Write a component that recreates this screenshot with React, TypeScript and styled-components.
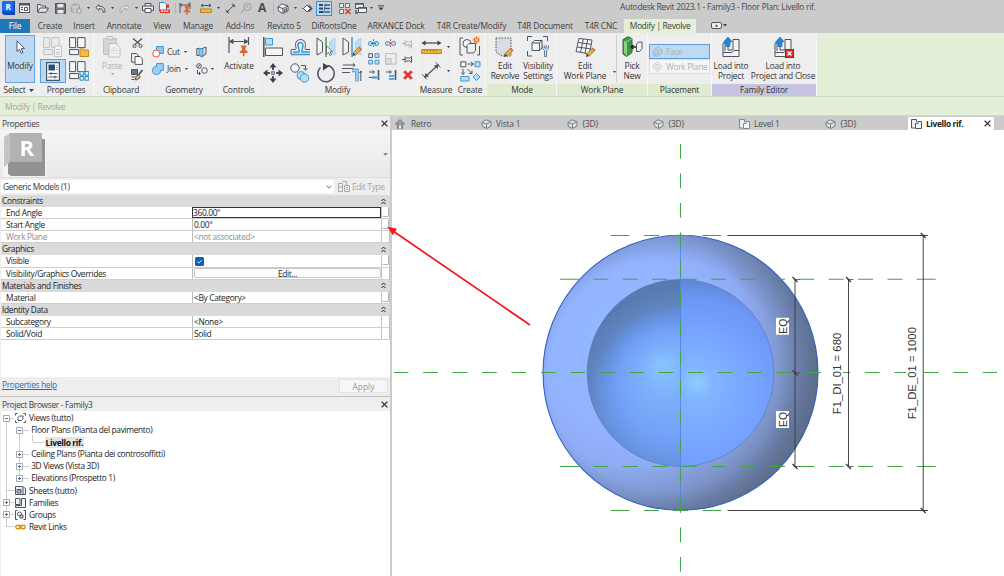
import React from "react";
import styled, { createGlobalStyle } from "styled-components";

const dk = "#4d5462";
const bl = "#3f97d3";
const lb = "#b9def3";
const green = "#3fa545";

const Global = createGlobalStyle`
  * { box-sizing: border-box; }
  body { margin: 0; background: #fff; overflow: hidden; }
  svg { display: block; flex: none; }
`;

const Window = styled.div`
  position: relative;
  width: 1004px;
  height: 576px;
  display: flex;
  flex-direction: column;
  background: #eee;
  color: #333;
  font: 8.4px/12px "Open Sans", "Noto Sans", sans-serif;
  letter-spacing: -0.2px;
  white-space: nowrap;
  overflow: hidden;
`;

/* ---------- title bar ---------- */
const QuickBar = styled.div`
  display: flex;
  align-items: center;
  height: 18px;
  padding-bottom: 2px;
  background: #cbcbcb;
`;
const Slot = styled.div<{ $w: number; $ml?: number }>`
  display: flex;
  align-items: center;
  justify-content: center;
  flex: none;
  width: ${(p) => p.$w}px;
  height: 16px;
  margin-left: ${(p) => p.$ml || 0}px;
  svg { overflow: visible; }
`;
const SlotOn = styled.div`
  display: flex;
  align-items: center;
  justify-content: center;
  width: 16px;
  height: 15px;
  border: 1px solid #3b8fd6;
  background: #b9dcf7;
`;
const VLine = styled.i`
  width: 1px;
  height: 12px;
  background: #b4b4b4;
`;
const Title = styled.div`
  margin-left: 232px;
  padding-bottom: 3px;
  color: #484848;
  letter-spacing: -0.27px;
`;

/* ---------- tabs ---------- */
const Tabs = styled.div`
  display: flex;
  align-items: flex-end;
  height: 15px;
  background: #cbcbcb;
`;
const Tab = styled.div<{ $w: number; $kind?: "file" | "active"; $ml?: number }>`
  flex: none;
  width: ${(p) => p.$w}px;
  height: 14px;
  line-height: 13px;
  margin-left: ${(p) => p.$ml || 0}px;
  text-align: center;
  letter-spacing: ${(p) => (p.$kind === "active" ? "-0.33px" : "-0.17px")};
  background: ${(p) => (p.$kind === "file" ? "#1c7ab8" : p.$kind === "active" ? "#e4efd8" : "transparent")};
  color: ${(p) => (p.$kind === "file" ? "#fff" : "#3c3c3c")};
`;

/* ---------- ribbon ---------- */
const Ribbon = styled.div`
  display: flex;
  height: 63px;
  background: #e4efd8;
`;
const Panel = styled.div<{ $w: number; $ml?: number }>`
  display: flex;
  flex-direction: column;
  flex: none;
  width: ${(p) => p.$w}px;
  margin-left: ${(p) => p.$ml || 0}px;
  background: #eee;
  border-right: 1px solid #f7f7f7;
`;
const PanelBody = styled.div`
  display: flex;
  height: 51px;
`;
const PanelLabel = styled.div<{ $bg?: string }>`
  display: flex;
  align-items: center;
  justify-content: center;
  gap: 4px;
  height: 12px;
  line-height: 12px;
  background: ${(p) => p.$bg || "transparent"};
`;
const Big = styled.div<{ $w: number; $off?: boolean }>`
  display: flex;
  flex-direction: column;
  align-items: center;
  flex: none;
  width: ${(p) => p.$w}px;
  padding-top: 3px;
  line-height: 10px;
  text-align: center;
  color: ${(p) => (p.$off ? "#b0b0b0" : "#333")};
`;
const BigIcon = styled.div`
  display: flex;
  align-items: center;
  justify-content: center;
  height: 22px;
  margin-bottom: 3px;
`;
const ModifyButton = styled(Big)`
  margin: 2px 0 0 5px;
  height: 48px;
  padding-top: 0;
  border: 1px solid #6ba5d8;
  background: #bcd9f3;
`;
const IconGrid = styled.div<{ $cols: string; $rows: string; $pt?: number; $pl?: number }>`
  display: grid;
  grid-template-columns: ${(p) => p.$cols};
  grid-template-rows: ${(p) => p.$rows};
  place-items: center;
  align-content: start;
  padding: ${(p) => p.$pt || 0}px 0 0 ${(p) => p.$pl || 0}px;
`;
const Drop = styled.div<{ $pt: number }>`
  flex: none;
  padding-top: ${(p) => p.$pt}px;
`;
const Pressed = styled.div`
  display: flex;
  align-items: center;
  justify-content: center;
  width: 26px;
  height: 24px;
  border: 1px solid #58a0de;
  background: #b9daf5;
`;
const Cmd = styled.div`
  display: flex;
  align-items: center;
  justify-self: start;
  gap: 3px;
`;
const Divider = styled.i`
  width: 1px;
  height: 47px;
  margin-top: 2px;
  background: #cfcfcf;
`;
const PlacementList = styled.div`
  display: flex;
  flex-direction: column;
  padding: 11px 0 0 1px;
  letter-spacing: -0.3px;
`;
const PlacementItem = styled.div<{ $on?: boolean }>`
  display: flex;
  align-items: center;
  gap: 3px;
  width: 61px;
  height: 15px;
  padding-left: 2px;
  border: 1px solid ${(p) => (p.$on ? "#5c9fdb" : "#dedede")};
  background: ${(p) => (p.$on ? "#bcdaf4" : "#f6f6f6")};
  color: #aeb2b6;
`;
const OptionsBar = styled.div`
  height: 20px;
  padding: 4px 5px 0;
  line-height: 12px;
  border-top: 1px solid #cfd6c8;
  border-bottom: 1px solid #d3dac9;
  background: #e4efd8;
  color: #a2a8a0;
  letter-spacing: -0.35px;
`;

/* ---------- body ---------- */
const Body = styled.div`
  display: flex;
  flex: 1;
  min-height: 0;
`;
const Side = styled.div`
  display: flex;
  flex-direction: column;
  flex: none;
  width: 392px;
  border-right: 2px solid #cbcbcb;
  letter-spacing: -0.34px;
`;
const PaneTitle = styled.div`
  display: flex;
  align-items: center;
  justify-content: space-between;
  height: 14px;
  padding: 1px 2px 0;
  background: #eee;
  color: #3d3d3d;
`;
const Preview = styled.div`
  display: flex;
  align-items: center;
  justify-content: space-between;
  height: 48px;
  padding: 1px 2px 0 3px;
  background: linear-gradient(#f5f5f5, #e9e9e9);
  border-bottom: 1px solid #dcdcdc;
`;
const TypeRow = styled.div`
  display: flex;
  align-items: center;
  height: 17px;
`;
const Combo = styled.div`
  display: flex;
  align-items: center;
  justify-content: space-between;
  width: 333px;
  height: 13px;
  margin-left: 1px;
  padding: 0 2px;
  background: #fff;
`;
const EditType = styled.div`
  display: flex;
  align-items: center;
  gap: 2px;
  padding-left: 4px;
  color: #a5a5a5;
`;
const Grid = styled.div`
  height: 182px;
  margin-left: 1px;
  background: #fff;
`;
const GroupRow = styled.div`
  display: flex;
  align-items: center;
  justify-content: space-between;
  height: 12.1px;
  padding: 0 4px 0 1px;
  background: #dadada;
  color: #222;
`;
const PropRow = styled.div<{ $off?: boolean }>`
  display: grid;
  grid-template-columns: 191px 189px 1fr;
  height: 12.1px;
  line-height: 11px;
  border-bottom: 1px solid #cfcfcf;
  color: ${(p) => (p.$off ? "#8d8d8d" : "#222")};
`;
const Key = styled.div`
  padding-left: 5px;
`;
const Val = styled.div<{ $focus?: boolean }>`
  display: flex;
  align-items: center;
  padding-left: ${(p) => (p.$focus ? 0 : 1)}px;
  border: ${(p) => (p.$focus ? "1px solid #333" : "solid #bbb")};
  border-width: ${(p) => (p.$focus ? "1px" : "0 0 0 1px")};
  line-height: ${(p) => (p.$focus ? 9 : 11)}px;
`;
const AssocCell = styled.div`
  border-left: 1px solid #c4c4c4;
  border-right: 1px solid #c4c4c4;
`;
const Assoc = styled.div<{ $btn?: boolean }>`
  height: 10px;
  width: 7px;
  border: ${(p) => (p.$btn ? "solid #b5b5b5" : "solid transparent")};
  border-width: 0 1px 1px 0;
  border-radius: 2px;
  background: #fff;
`;
const EditButton = styled.div`
  width: 187px;
  height: 10px;
  line-height: 9px;
  text-align: center;
  border: 1px solid #c6c6c6;
  border-radius: 2px;
  background: #fdfdfd;
`;
const PaneFooter = styled.div`
  display: flex;
  align-items: flex-start;
  justify-content: space-between;
  height: 20px;
  padding: 2px 2px 0;
  border-bottom: 1px solid #bfbfbf;
`;
const Link = styled.span`
  color: #1a6fc4;
  text-decoration: underline;
  text-decoration-thickness: 1px;
`;
const Apply = styled.div`
  width: 49px;
  height: 14px;
  line-height: 13px;
  text-align: center;
  letter-spacing: 0;
  border: 1px solid #e2e2e2;
  background: #f6f6f6;
  color: #999;
`;
const Tree = styled.div`
  flex: 1;
  margin-left: 1px;
  padding-top: 1px;
  background:
    linear-gradient(#cfcfcf, #cfcfcf) 5px 7px / 1px 109px no-repeat,
    linear-gradient(#cfcfcf, #cfcfcf) 18px 19px / 1px 49px no-repeat,
    linear-gradient(#cfcfcf, #cfcfcf) 31px 24px / 1px 7px no-repeat,
    #fff;
  color: #222;
`;
const Node = styled.div<{ $d: number }>`
  display: flex;
  align-items: center;
  height: 12.08px;
  padding-left: ${(p) => 2 + p.$d * 13.3}px;
`;
const Leaf = styled.b`
  margin-left: 1px;
  padding: 0 1px;
  height: 11px;
  line-height: 11px;
  background: #e3e3e3;
  color: #111;
`;
const Work = styled.div`
  display: flex;
  flex-direction: column;
  flex: 1;
`;
const ViewTabs = styled.div`
  display: flex;
  height: 14px;
  padding-top: 1px;
  background: #cbcbcb;
`;
const ViewTab = styled.div<{ $on?: boolean }>`
  display: flex;
  align-items: center;
  gap: 4px;
  width: 86px;
  padding-left: 3px;
  background: ${(p) => (p.$on ? "#fff" : "transparent")};
  font-weight: ${(p) => (p.$on ? 700 : 400)};
  letter-spacing: ${(p) => (p.$on ? "-0.37px" : "-0.2px")};
  color: ${(p) => (p.$on ? "#222" : "#505050")};
  svg:last-child:not(:first-child) { margin-left: auto; margin-right: 3px; }
`;
const Canvas = styled.svg`
  background: #fff;
`;
const Pointer = styled.svg`
  position: absolute;
  left: 384px;
  top: 222px;
`;

type IP = { w: number; h: number; children: React.ReactNode; sw?: number; c?: string };
const I = ({ w, h, children, sw = 1, c = dk }: IP) => (
  <svg width={w} height={h} viewBox={`0 0 ${w} ${h}`} fill="none" stroke={c} strokeWidth={sw}>
    {children}
  </svg>
);
const Down = ({ s = 4, c = "#3c3c3c" }: { s?: number; c?: string }) => (
  <svg width={s} height={s / 2 + 0.5} viewBox="0 0 4 2.5">
    <path d="M0 0h4L2 2.5z" fill={c} />
  </svg>
);
const Cross = () => (
  <I w={7} h={7} sw={1.3} c="#2c2c2c"><path d="M.6.6l5.8 5.8M6.4.6L.6 6.4" /></I>
);
const Chev = () => (
  <I w={5} h={7} c="#222"><path d="M.5 3L2.5 1l2 2M.5 6l2-2 2 2" /></I>
);
const Pin = ({ x, y }: { x: number; y: number }) => (
  <g transform={`translate(${x} ${y})`} stroke="none">
    <path d="M1.2 0h4.600v1.200l-.8.5v2l1.800 1.600v1H.2v-1L2 3.700v-2l-.8-.5z" fill="#e2662c" />
    <path d="M3 6.300h1V9H3z" fill="#a04a24" />
  </g>
);
const Pencil = ({ x, y }: { x: number; y: number }) => (
  <g transform={`translate(${x} ${y})`} stroke="none">
    <path d="M6.800 0l2.400 2.200-6 5.900-2.500-2.300z" fill="#efb13e" stroke="#5b4a2a" strokeWidth=".6" />
    <path d="M6.800 0l2.400 2.200-1 1-2.400-2.300z" fill="#e06a50" />
    <path d="M.7 5.800l2.500 2.300L0 9z" fill="#3b3b3b" />
  </g>
);

/* quick access icons */
const Logo = () => (
  <svg width="13" height="14" viewBox="0 0 13 14">
    <path d="M0 1l2-1h11v14H2l-2-2z" fill="#0b49b4" />
    <path d="M0 1l2-1h9.500v10.500H0z" fill="#1b6cf0" />
    <text x="6.100" y="8.500" fontSize="8" fontWeight="700" fontFamily="Open Sans" fill="#fff" textAnchor="middle">R</text>
  </svg>
);
const HomeWin = () => (
  <I w={11} h={10}><rect x=".5" y=".5" width="10" height="9" fill="#f3f3f3" /><path d="M0 1.500h11" strokeWidth="2" /><path d="M2 4.500h2M2 6.500h2M5.500 4.500v3h3v-3z" /></I>
);
const Open = () => (
  <I w={12} h={9}><path d="M.5 8V.5h3l1 1.500h4v2M.7 8.300L3 4h8.500L9 8.300z" fill="#e7e7e7" /></I>
);
const Save = () => (
  <I w={11} h={11}><path d="M.5.5h10v10h-10z" fill="#6a7180" /><path d="M2.500 1h6v3.500h-6zM2.500 7h6v3.500h-6z" fill="#e8e8e8" stroke="none" /></I>
);
const CloudCube = () => (
  <I w={12} h={11} c="#9a9a9a"><path d="M1 3l4-2 4.500 1v5L5 10 1 8z" fill="#bdbdbd" /><path d="M1 3l4 1.500V10M5 4.500L9.500 2" stroke="#ddd" /><circle cx="9" cy="8" r="2.300" fill="#d6d6d6" /></I>
);
const Undo = ({ c = dk, flip = false }: { c?: string; flip?: boolean }) => (
  <I w={11} h={9} c={c}><g transform={flip ? "translate(11 0) scale(-1 1)" : ""}><path d="M4 .7L.8 3.500 4 6.300V4.700c2-.3 4 0 4 2v1.500h1.800C10.500 4.500 8.500 2.300 4 2.300z" fill="#e9e9e9" /></g></I>
);
const Printer = () => (
  <I w={12} h={10}><path d="M3 3V.5h6V3M.5 3h11v4.500H.5z" fill="#e8e8e8" /><path d="M3 5.500h6v4H3z" fill="#fff" /></I>
);
const Pdf = () => (
  <svg width="11" height="12" viewBox="0 0 11 12">
    <path d="M.5.5h5l2 2v7h-7z" fill="#eef3f8" stroke="#3c84c8" />
    <path d="M1 7.500h10V11H1zM7 2.500h3v3.200H7z" fill="#e43322" />
    <path d="M2 9.200h8" stroke="#fff" strokeWidth="1.300" strokeDasharray="2 .7" />
  </svg>
);
const PinDim = () => (
  <I w={12} h={12}><path d="M1 1v10M11 0v7M1 3h10M3 1.500L1 3l2 1.500M9 1.500L11 3 9 4.500" /><Pin x={4.500} y={4} /></I>
);
const RulerQ = () => (
  <I w={12} h={9}><path d="M1 1.500h10M3 0L1 1.500 3 3M9 0l2 1.500L9 3" /><rect x=".5" y="5" width="11" height="3.500" fill="#f4b638" stroke="#b17a18" strokeWidth=".8" /></I>
);
const DiagDim = () => (
  <I w={11} h={11}><path d="M2 9l7-7" /><path d="M1.500 6.500v3h3zM9.500 4.500v-3h-3z" fill={dk} stroke="none" /><path d="M.5 7.500l3 3M7.500.5l3 3" strokeWidth=".8" /></I>
);
const MeasureB = () => (
  <I w={21} h={20}><path d="M4 16L17 4" strokeWidth="1.200" /><path d="M3 17l1.500-5 3.500 3.500zM18 3l-5 1.500L16.500 8z" fill={dk} stroke="none" /><path d="M.8 13l5 5.500M14.500 1l5 5.500" strokeWidth=".9" /></I>
);
const TagQ = () => (
  <I w={12} h={11} c="#9a9a9a"><circle cx="7.500" cy="4" r="3.500" /><path d="M7 2v3M4.500 6L1 10" /></I>
);
const LetterA = styled.span`
  font: 700 12px/14px "Open Sans", sans-serif;
  color: #444a55;
`;
const House3d = () => (
  <I w={12} h={11}><path d="M.8 4L5 .8 11 3v5l-5 2.500L1.500 8z" fill="#f2f2f2" /><path d="M1 4l5 1.500V10M6 5.500L11 3M7.500 6.500v2l2-1v-2z" /></I>
);
const Diamond = () => (
  <I w={10} h={9}><path d="M5 1l3.500 3.500L5 8 1.500 4.500z" fill="#fff" /><path d="M6.500 1.500l3 3-3 3" strokeWidth="1.800" /><path d="M0 4.500h1.500" /></I>
);
const Thin = () => (
  <I w={12} h={11} sw={1.300}><path d="M1 2h4M1 5.500h4M1 9h4" strokeWidth="1.800" stroke="#28466b" /><path d="M6.500 2H12M6.500 5.500H12M6.500 9H12" /><path d="M7.500.5l-2 10" strokeWidth=".8" /></I>
);
const CloseHidden = () => (
  <I w={12} h={11}><path d="M.5.5h4v4h-4zM.5 6.500h4v4h-4zM6.500.5h4v4h-4z" stroke="#6b7179" fill="#e8e8e8" /><path d="M6.500 6l5 5M11.500 6l-5 5" stroke="#dc3b33" strokeWidth="1.500" /></I>
);
const SwitchWin = () => (
  <I w={12} h={11}><path d="M.5.5h8v5h-8z" fill="#e8e8e8" /><path d="M3.500 4.500h8v5h-8z" fill="#f5f5f5" /><path d="M.5 1h8M3.500 5h8M1 7v3h2" strokeWidth="1.400" /></I>
);

/* ribbon icons */
const Cursor = () => (
  <I w={9} h={14}><path d="M1 .8v10.700l2.500-2.200 1.700 4 1.800-.8-1.700-3.800 3.200-.2z" fill="#fff" /></I>
);
const TypeStack = ({ c = dk, f = "#f5f5f5", extra }: { c?: string; f?: string; extra?: "folder" | "grid" | "doc" }) => (
  <I w={20} h={20} c={c}>
    <path d="M.6.6h6v10h-6zM8.600.6h7.500v10H8.600zM.6 12.600h9v5h-9z" fill={f} />
    <path d="M1.300 1.500h4.500M9.300 1.500h6M1.300 13.500h7" stroke="#d6e4ee" />
    {extra === "folder" && <path d="M11 12h3.500l1 1h4v6.500H11z" fill="#f5bd44" stroke="#c58a1c" />}
    {extra === "grid" && <path d="M11 10.500h3.700v3.700H11zM16 10.500h3.700v3.700H16zM11 15.500h3.700v3.700H11zM16 15.500h3.700v3.700H16z" fill="#d8effa" stroke="#2c8bc9" />}
    {extra === "doc" && <path d="M11.500 9h7v10.500h-7zM13 12.500h4M13 15h4M13 17h4" fill="#f5f5f5" />}
  </I>
);
const PropsIcon = () => (
  <I w={14} h={19}><path d="M.6.6h12.800v17.800H.6z" fill="#fff" strokeWidth="1.200" /><path d="M2.500 2.500h6.500V8.500H2.500z" fill="#24507f" stroke="none" /><path d="M10 3.500h2M10 5.500h2M10 7.500h2" stroke="#9aa" /><path d="M2.500 11.500h9M2.500 15h9M5 10v3M9 13.500v3" /></I>
);
const PasteIcon = () => (
  <I w={18} h={22} c="#bdbdbd"><path d="M.6 2.500h13v16H.6z" fill="#d5d5d5" /><path d="M4 .6h6v3H4z" fill="#e8e8e8" /><path d="M6 7.500h7l4 4v9.500H6z" fill="#f3f3f3" /><path d="M8 12h6M8 14.500h7M8 17h7" stroke="#d2d2d2" /></I>
);
const Scissors = () => (
  <I w={11} h={12}><path d="M1 1.500l7 6M10 1.500l-7 6" strokeWidth="1.300" /><circle cx="2.500" cy="9" r="1.600" /><circle cx="8.500" cy="9" r="1.600" /></I>
);
const CopyIcon = () => (
  <I w={12} h={12}><path d="M.6.6h5l1.500 1.500v7H.6z" fill="#f5f5f5" /><path d="M4 3.500h5l2.300 2.300v5.600H4z" fill="#fff" /></I>
);
const MatchIcon = () => (
  <I w={12} h={12}><path d="M.5.5h6v5h-6z" fill="#6c7482" /><path d="M.5 8h4M.5 10.500h3" /><path d="M11.500 1L7 6.500" strokeWidth="1.800" /><path d="M7.500 6c-2 0-3 2-3 5 2.500-.3 4.500-1.500 4.500-3.500z" fill="#e3b368" /></I>
);
const CutGeo = () => (
  <I w={12} h={12} c={bl}><path d="M4.500.6h6.800v6.800H4.500z" fill="#8fcaec" /><circle cx="4.200" cy="7.500" r="3.500" fill="#fafafa" stroke="#e1574a" /></I>
);
const JoinGeo = () => (
  <I w={12} h={12} c={bl}><path d="M4.500.6h6.800v6.800H8.500A4 4 0 1 1 4.500 3.500z" fill="#9dd0ee" /></I>
);
const SplitFace = () => (
  <I w={11} h={12}><path d="M.8 2.500h3v7h-3z" fill="#e6e6e6" /><path d="M5 3l5-2v7l-5 3z" fill="#e6e6e6" /><path d="M3 2l4 1.500V11L3 9z" fill="#8cc8ee" stroke={bl} /></I>
);
const PaintGeo = () => (
  <I w={12} h={12}><circle cx="3" cy="3" r="2.300" /><path d="M1.500 4.500l3-3M1.500 7v3.500h2.500M3 9l1.500 1.500L3 12" /><rect x="6" y="5" width="5" height="5" rx="1.500" fill="#f3f3f3" /></I>
);
const ActivateIcon = () => (
  <I w={22} h={20}><path d="M1 0v16M20.500 0v8M1.500 4.500h18.500" strokeWidth="1.200" /><path d="M5 2.500v4l-3.500-2zM16.500 2.500v4l3.500-2z" fill={dk} /><g transform="translate(11.500 8.500) scale(1.2)"><Pin x={0} y={0} /></g></I>
);
const AlignIcon = () => (
  <I w={20} h={20}><path d="M.8 0v20" strokeWidth="1.500" /><path d="M2.500 1.500h7V8h-7z" fill={lb} stroke={bl} /><path d="M2.500 11h17v7.500h-17z" fill="#f5f5f5" /></I>
);
const OffsetIcon = () => (
  <I w={21} h={18}>
    <path d="M1 16.500h19" stroke={bl} strokeWidth="1.600" />
    <path d="M1 16V12.500a1 1 0 0 1 1-1h3.500c1.200-1.500 0-2.500 0-5a5 5 0 0 1 10 0c0 2.500-1.200 3.500 0 5H20" />
    <path d="M3 14h6c.7-2-1-4-1-7a2.500 2.500 0 0 1 5 0c0 3-1.700 5-1 7h8" stroke={bl} strokeWidth="1.500" />
  </I>
);
const MirrorIcon = ({ pencil }: { pencil?: boolean }) => (
  <I w={20} h={20}><path d="M1 1l5.500 4v10L1 18z" fill="#f3f3f3" /><path d="M19 1l-5.500 4v10l5.500 3z" fill={lb} stroke="#a9d3ec" /><path d="M10 0v20" stroke={pencil ? bl : "#34a853"} strokeWidth="1.500" />
    {pencil ? <Pencil x={10.500} y={10} /> : <path d="M10.500 9v8l2-1.500 1.500 3 1.500-.7-1.500-3 2.500-.2z" fill="#fff" strokeWidth=".8" />}
  </I>
);
const MoveIcon = () => (
  <I w={20} h={20} sw={2}><path d="M10 3v4M10 13v4M3 10h4M13 10h4" /><path d="M10 0l3.500 4.500h-7zM10 20l3.500-4.500h-7zM0 10l4.500-3.500v7zM20 10l-4.500-3.500v7z" fill="#3c4350" stroke="none" /><rect x="8.800" y="8.800" width="2.400" height="2.400" strokeWidth="1" fill="#fff" /></I>
);
const CopyMod = () => (
  <I w={20} h={20}><circle cx="5" cy="5" r="4.200" fill="#f5f5f5" /><path d="M11 2.500h4.500v3.500M13.500 5l2 2.500 2-2.500" /><circle cx="11" cy="12.500" r="4" fill={lb} stroke={bl} /><circle cx="14.500" cy="15" r="4.200" fill={lb} stroke={bl} /></I>
);
const RotateIcon = () => (
  <I w={20} h={20} sw={1.500}><path d="M11.500 2.500A8.200 8.200 0 1 1 4.500 4.500" /><path d="M7 0v7.500l6-4z" fill="#3c4350" stroke="none" /></I>
);
const TrimIcon = () => (
  <I w={20} h={20}><path d="M0 5.500h11.500M0 9.500h8" /><path d="M10 7.500h5v11" stroke={bl} strokeWidth="3.500" /><path d="M10 7.500h5v11" stroke={lb} strokeWidth="1.500" /><path d="M1 2h12M11 .3L13 2l-2 1.700M18.800 8v10M17.300 10l1.500-2 1.200 2" /></I>
);
const Split = ({ gap }: { gap?: boolean }) => (
  <I w={11} h={9} c={bl}><rect x=".6" y="2.600" width="3.800" height="3.800" rx="1" fill={lb} /><rect x="6.600" y="2.600" width="3.800" height="3.800" rx="1" fill={lb} />{!gap && <path d="M3 4.500h5" stroke={dk} />}<path d="M5.500 0v9" stroke="#d9503f" strokeDasharray="2 1" /></I>
);
const Array4 = () => (
  <I w={12} h={12} c={bl}><path d="M.7.7h3.800v3.800H.7z" stroke={dk} /><path d="M7 .7h4v3.800H7zM.7 7.200h3.800V11H.7zM7 7.200h4V11H7z" fill={lb} /></I>
);
const ScaleIcon = () => (
  <I w={12} h={12} c="#bcbcbc"><path d="M.6.6h10.500v10.500H.6z" /><path d="M.6 5.500h5.500v5.600H.6z" fill="#ddd" /></I>
);
const PinSide = ({ c = dk, x }: { c?: string; x?: boolean }) => (
  <I w={11} h={11} c={c}><path d="M0 5.500h3M3 2.500v6M3.500 4h3l1 .3 2-1.800v6l-2-1.800-1 .3h-3" />{x && <path d="M6 6l4.500 4.500M10.500 6L6 10.500" />}</I>
);
const TrimOne = ({ two }: { two?: boolean }) => (
  <I w={12} h={12}><path d="M10.500 1v10" strokeWidth="1.600" /><path d="M1 3h5M4.500 1.500L6.500 3l-2 1.500" /><path d="M4 8.500h5" stroke={bl} strokeWidth={two ? 4.500 : 2.200} /><path d="M1 8.500h3" />{two && <path d="M1 8.500h8" stroke="#fff" />}</I>
);
const Delete = () => (
  <I w={10} h={10} sw={2.800} c="#e0352d"><path d="M1.200 1.200l7.600 7.600M8.800 1.200L1.200 8.800" /></I>
);
const MeasureA = () => (
  <I w={21} h={14}><path d="M2 3h17" strokeWidth="1.300" /><path d="M4.500.5v5L.5 3zM16.500.5v5l4-2.500z" fill="#3c4350" stroke="none" /><path d="M.6 9.600h19.800v3.800H.6z" fill="#f3b83b" stroke="#b98118" /><path d="M3.500 10v1.500M6.500 10v1.500M9.500 10v1.500M12.500 10v1.500M15.500 10v1.500" stroke="#a87310" /></I>
);
const CreateA = () => (
  <I w={22} h={21}><path d="M4 2H1v17h3M18 19h2.500V10" /><circle cx="8" cy="7.500" r="4" fill="#f5f5f5" /><path d="M8 9.500l2-2h6.500v7l-2 2.500H8z" fill="#eee" /><path d="M17.500 0v8M13.500 4h8M14.700 1.200l5.600 5.600M20.300 1.200l-5.600 5.600" stroke="#e8702a" strokeWidth=".9" /><circle cx="17.500" cy="4" r="2" fill="#ffd36b" stroke="#e8702a" strokeWidth="1.200" /></I>
);
const CreateB = () => (
  <I w={21} h={21}><path d="M.8.8h5v5h-5z" fill="#f5f5f5" /><path d="M15 .8h5v5h-5z" fill={lb} stroke={bl} /><path d="M7.500 3h5.500M11 1l2.500 2L11 5M3 8v5M1.300 11.500L3 13.500l1.700-2M7.500 8l4.500 4.500M12 9.500v3H9" /><path d="M.8 15.500H9V20H.8z" fill={lb} stroke={bl} /><path d="M16.500 12.500l3.500 3.500-3.500 3.500L13 16z" fill={lb} stroke={bl} /></I>
);
const EditRevolve = () => (
  <I w={20} h={21}><path d="M1 1h15v18H7l-6-4z" fill="#d9dce0" strokeDasharray="1.500 1.300" /><Pencil x={9} y={11} /></I>
);
const Visibility = () => (
  <I w={22} h={22}><path d="M.5 5V.5H5M16 .5h4.500V5M.5 15v5H5" /><path d="M5 7l2.500-2.500H15V12l-2.500 2.500H5z" fill="#f5f5f5" /><path d="M5 7h7.500v7.500M12.500 7L15 4.500" /><path d="M15.500 9.500v3l2 2v6h2v-6l2-2v-3M17.300 9.500v2.500h2V9.500" fill="#cfe0ee" stroke="#5f7f9f" /></I>
);
const WorkPlaneIcon = () => (
  <I w={21} h={21}><path d="M4 1.500L17 3l-2.500 14L1 14.500z" fill="#f7f7f7" /><path d="M8.300 2L5.500 15.500M12.700 2.500L10 16.300M3.200 5.500l13 1.800M2.200 10l13 1.800" /><Pencil x={11} y={11} /></I>
);
const PickNew = () => (
  <I w={21} h={22}><path d="M1 3.500L6 .8l4 1.700v14l-5.500 4L1 18z" fill="#3f9a3f" stroke="#2b6c2e" /><path d="M2 5l2.500.5v13L2 17z" fill="#8dcf88" stroke="none" /><path d="M4.500 5.500l5.500-3M4.500 5.500V20" stroke="#93d08e" /><path d="M9 11h5M11.500 9L9 11l2.500 2" stroke="#222" strokeWidth="1.300" /><path d="M14.500 8l2.500-2h3v6.500l-2.500 3h-3z" fill="#f5f5f5" /></I>
);
const LoadIcon = ({ close }: { close?: boolean }) => (
  <I w={21} h={21}><path d="M2 6v13.500h16V2.500h-6V13H7V6z" fill="#f3f3f3" /><path d="M2 15.500h9l2-2h5M4 4v10" /><path d="M7 0l4.200 4.800H9V9.500H5V4.800H2.800z" fill="#1e88e5" stroke="#136ab8" strokeWidth=".6" />
    {close && <><rect x="12.500" y="12.500" width="8" height="8" fill="#de2f2a" stroke="#a81e1c" /><path d="M14.500 14.500l4 4M18.500 14.500l-4 4" stroke="#fff" strokeWidth="1.200" /></>}
  </I>
);
const FaceIcon = () => (
  <I w={11} h={11} c="#a9b4bd"><path d="M1 6l2-3 4-2 3 3v3l-4 3H2zM3 6h4v2H3zM3 3l4 2 3-1" /></I>
);
const WpIcon = () => (
  <I w={11} h={11} c="#c2c2c2"><path d="M5.500.7l4.800 4.800-4.800 4.800L.7 5.500zM5.500 3l2 2.500-2 2.500-2-2.500z" /></I>
);
const BigR = () => (
  <svg width="43" height="45" viewBox="0 0 43 45">
    <path d="M0 0h43v45H0z" fill="#f4f4f4" />
    <path d="M5 33L8 7h34v37H8l-3-2z" fill="#929292" />
    <path d="M1 5l6-4v29l-6 5z" fill="#c4c4c4" />
    <path d="M7 1h32v29H5l2-2z" fill="#b2b2b2" />
    <text x="23.500" y="24" fontSize="22" fontWeight="700" fontFamily="Open Sans" fill="#fff" textAnchor="middle">R</text>
  </svg>
);
const EditTypeIcon = () => (
  <I w={12} h={11} c="#a9a9a9"><path d="M.5 2.500h4v8h-4zM.5 6h4M4.500.5h4v4M6.500 4.500h5v6h-5zM8 6.500h2M8 8.500h2" /></I>
);

/* view tab icons */
const HomeIcon = () => (
  <I w={10} h={10} c="#777"><path d="M5 .6L.6 5h2v4.400h4.800V5h2z" fill="#999" /><path d="M4 6.500h2v3H4z" fill="#eee" stroke="none" /></I>
);
const CubeIcon = () => (
  <I w={11} h={10} c="#7c7f85"><path d="M.8 3.500L5 .8 10 2.500v4.500L5.500 9.500 1.500 7.500z" fill="#dedede" /><path d="M1 3.500l4.500 1.500v4M5.500 5L10 2.500" /></I>
);
const PlanIcon = ({ c = "#85888e" }: { c?: string }) => (
  <I w={11} h={10} c={c}><path d="M4.500 9H.5V.5h5V3" fill="#e8eef2" /><path d="M4.500 4.500h2.500v-2h3.500v7h-6z" fill="#f5f5f5" /></I>
);

/* tree icons */
const Toggle = ({ open }: { open?: boolean }) => (
  <I w={7} h={7} c="#a8a8a8"><path d="M.5.5h6v6h-6z" fill="#fff" /><path d={open ? "M2 3.500h3" : "M2 3.500h3M3.500 2v3"} stroke="#4a6cab" /></I>
);
const Stub = styled.i<{ $w?: number; $ml?: number }>`
  flex: none;
  width: ${(p) => p.$w || 4}px;
  height: 1px;
  margin-left: ${(p) => p.$ml || 0}px;
  background: #cfcfcf;
`;
const NodeIcon = styled.span`
  margin: 0 3px 0 1px;
`;
const ViewsIcon = () => (
  <I w={11} h={10}><path d="M.5 2.500v-2h2M8.500.5h2v2M.5 7.500v2h2M8.500 9.500h2v-2" /><path d="M3 4.500L4.500 3H8v3L6.500 7.500H3z" /></I>
);
const SheetIcon = () => (
  <I w={11} h={9}><path d="M.5.5h7l3 2v6H.5z" fill="#eef0f3" /><path d="M2 3.500h4v3.500H2zM8 1v7M3 5h3" /></I>
);
const FamIcon = () => (
  <I w={11} h={10}><path d="M.5.5h4.500v6H.5zM6.500.5h4v9H.5v-2h6z" fill="#f0f3f6" /></I>
);
const GroupIcon = () => (
  <I w={11} h={10}><path d="M2.500.5h-2v9h2M8.500.5h2v9h-2" /><circle cx="4.500" cy="4" r="2" /><path d="M5 5h3v3H5z" fill="#d9dce0" /></I>
);
const LinkIcon = () => (
  <I w={11} h={6} c="#d9930f" sw={1.400}><rect x=".8" y="1.200" width="4.600" height="3.600" rx="1.800" /><rect x="5.600" y="1.200" width="4.600" height="3.600" rx="1.800" /><path d="M3.500 3h4" /></I>
);

const Prop = ({ k, children, focus, btn, off }: { k: string; children: React.ReactNode; focus?: boolean; btn?: boolean; off?: boolean }) => (
  <PropRow $off={off}>
    <Key>{k}</Key>
    <Val $focus={focus}>{children}</Val>
    <AssocCell><Assoc $btn={btn} /></AssocCell>
  </PropRow>
);
const Group = ({ children }: { children: string }) => (
  <GroupRow>{children}<Chev /></GroupRow>
);
const CheckBox = styled.span`
  padding-left: 1px;
`;
const Check = () => (
  <CheckBox>
    <svg width="9" height="9" viewBox="0 0 9 9">
      <rect width="9" height="9" rx="1.500" fill="#0a5fb8" /><path d="M2.300 4.600l1.500 1.500 3-3" fill="none" stroke="#fff" strokeWidth=".9" />
    </svg>
  </CheckBox>
);

const tabs: [string, number][] = [
  ["Create", 40], ["Insert", 28], ["Annotate", 52], ["View", 24], ["Manage", 48], ["Add-Ins", 36],
  ["Revizto 5", 52], ["DiRootsOne", 48], ["ARKANCE Dock", 76], ["T4R Create/Modify", 75],
  ["T4R Document", 72], ["T4R CNC", 40],
];

const Tick = ({ x, y }: { x: number; y: number }) => (
  <g stroke="#333"><path d={`M${x - 2.500} ${y - 2.500}l5 5`} strokeWidth="1.200" /><path d={`M${x - 1} ${y}h6`} strokeWidth=".7" /></g>
);
const Label = ({ x, y, len, children }: { x: number; y: number; len: number; children: string }) => (
  <text transform={`translate(${x} ${y}) rotate(-90)`} textAnchor="middle" textLength={len} lengthAdjust="spacingAndGlyphs"
    fontFamily="Liberation Sans" fontSize="11.500" letterSpacing="0" fill="#333">{children}</text>
);

const Drawing = () => (
  <Canvas width="612" height="446" viewBox="392 130 612 446" fill="none">
    <defs>
      <radialGradient id="ring" gradientUnits="userSpaceOnUse" cx="632" cy="346" r="192">
        <stop offset="0" stopColor="#91bcff" /><stop offset=".45" stopColor="#94b3ff" />
        <stop offset=".62" stopColor="#8fabf4" /><stop offset=".78" stopColor="#7f97ce" /><stop offset=".92" stopColor="#6b7da5" /><stop offset="1" stopColor="#62738f" />
      </radialGradient>
      <radialGradient id="rim" gradientUnits="userSpaceOnUse" cx="665" cy="376" r="153">
        <stop offset=".76" stopColor="#4d6080" stopOpacity="0" /><stop offset="1" stopColor="#556884" stopOpacity=".5" />
      </radialGradient>
      <radialGradient id="bowlL" gradientUnits="userSpaceOnUse" cx="690" cy="410" r="126" fx="660" fy="364">
        <stop offset="0" stopColor="#8ac4ff" /><stop offset=".2" stopColor="#7cb0fb" /><stop offset=".45" stopColor="#719ff6" />
        <stop offset=".58" stopColor="#6893e2" /><stop offset=".74" stopColor="#5f84c0" /><stop offset="1" stopColor="#587aae" />
      </radialGradient>
      <radialGradient id="bowlR" gradientUnits="userSpaceOnUse" cx="692" cy="400" r="125" fx="697" fy="381">
        <stop offset="0" stopColor="#90cdff" /><stop offset=".14" stopColor="#80b4ff" /><stop offset=".5" stopColor="#76a3ff" />
        <stop offset=".78" stopColor="#6c97f5" /><stop offset="1" stopColor="#5c82c8" />
      </radialGradient>
    </defs>
    <circle cx="680.500" cy="372.800" r="137.500" fill="url(#ring)" />
    <circle cx="680.500" cy="372.800" r="137.500" fill="url(#rim)" stroke="#3560c4" strokeWidth="1.100" />
    <path d="M680.500 279.400A93.300 93.500 0 0 0 680.500 466.400Z" fill="url(#bowlL)" />
    <path d="M680.500 279.400A93.300 93.500 0 0 1 680.500 466.400Z" fill="url(#bowlR)" />
    <ellipse cx="680.500" cy="372.900" rx="93.300" ry="93.500" stroke="#5474b8" strokeWidth=".6" />
    <path d="M680.500 236v274.500" stroke="#4d83e6" strokeWidth=".8" />
    <g stroke={green} strokeWidth="1.100">
      <path d="M680.500 144v429" strokeDasharray="14.700 14.800" />
      <path d="M393.700 372.500H997" strokeDasharray="14.700 14.750" />
      {[279.300, 466.500].map((y) => (
        <g key={y}><path d={`M560 ${y}h19M916.700 ${y}h19`} /><path d={`M593.500 ${y}H903`} strokeDasharray="15 14.400" /></g>
      ))}
      {[235.500, 510.500].map((y) => (
        <path key={y} d={`M610.600 ${y}h18.700M644 ${y}h15M673 ${y}h15M702.600 ${y}h18.500`} />
      ))}
    </g>
    <path d="M832 331h11v85h-11zM906 325h11v96h-11zM776 317.700h13v17h-13zM776 411h13v17h-13z" fill="#fff" />
    <path d="M727.500 235.500h200M727.500 510.500h200M923.200 236v274.500M848.500 279.500v187M795 279.500v187" stroke="#3c3c3c" strokeWidth=".95" />
    {[279.500, 372.800, 466.500].map((y) => <Tick key={y} x={795} y={y} />)}
    {[279.500, 466.500].map((y) => <Tick key={y} x={848.500} y={y} />)}
    {[235.500, 510.500].map((y) => <Tick key={y} x={923.200} y={y} />)}
    <Label x={786.700} y={326.200} len={15}>EQ</Label>
    <Label x={786.700} y={419.500} len={15}>EQ</Label>
    <Label x={841} y={373.500} len={81.500}>F1_DI_01 = 680</Label>
    <Label x={915.500} y={373.200} len={92.300}>F1_DE_01 = 1000</Label>
  </Canvas>
);

export default function App() {
  return (
    <Window>
      <Global />
      <QuickBar>
        <Slot $w={16}><Logo /></Slot>
        <Slot $w={16}><HomeWin /></Slot>
        <Slot $w={16} $ml={3}><Open /></Slot>
        <Slot $w={16} $ml={1}><Save /></Slot>
        <Slot $w={16}><CloudCube /></Slot>
        <Slot $w={8}><Down s={3} /></Slot>
        <Slot $w={16}><Undo /></Slot>
        <Slot $w={8}><Down s={3} /></Slot>
        <Slot $w={16}><Undo c="#a2a2a2" flip /></Slot>
        <Slot $w={8}><Down s={3} /></Slot>
        <Slot $w={16}><Printer /></Slot>
        <Slot $w={16}><Pdf /></Slot>
        <Slot $w={6}><VLine /></Slot>
        <Slot $w={14}><PinDim /></Slot>
        <Slot $w={16} $ml={6}><RulerQ /></Slot>
        <Slot $w={8}><Down s={3} /></Slot>
        <Slot $w={16}><DiagDim /></Slot>
        <Slot $w={16}><TagQ /></Slot>
        <Slot $w={16}><LetterA>A</LetterA></Slot>
        <Slot $w={6}><VLine /></Slot>
        <Slot $w={14}><House3d /></Slot>
        <Slot $w={10}><Down s={3} /></Slot>
        <Slot $w={14}><Diamond /></Slot>
        <Slot $w={20}><SlotOn><Thin /></SlotOn></Slot>
        <Slot $w={16} $ml={3}><CloseHidden /></Slot>
        <Slot $w={16}><SwitchWin /></Slot>
        <Slot $w={5}><Down s={3} /></Slot>
        <Slot $w={14}><I w={6} h={6} c="#444"><path d="M0 .8h6" /><path d="M.3 2.500h5.400L3 5.500z" fill="#444" stroke="none" /></I></Slot>
        <Title>Autodesk Revit 2023.1 - Family3 - Floor Plan: Livello rif.</Title>
      </QuickBar>
      <Tabs>
        <Tab $w={30} $kind="file">File</Tab>
        {tabs.map(([t, w]) => <Tab key={t} $w={w}>{t}</Tab>)}
        <Tab $w={72} $ml={3} $kind="active">Modify | Revolve</Tab>
        <Slot $w={14} $ml={13}><I w={11} h={7}><rect x=".5" y=".5" width="10" height="6" rx="1.500" fill="#eee" /><path d="M3.800 4.500h3.400L5.500 2.500z" fill="#333" stroke="none" /></I></Slot>
        <Slot $w={4}><Down s={4} /></Slot>
      </Tabs>
      <Ribbon>
        <Panel $w={39}>
          <PanelBody>
            <ModifyButton $w={30}><BigIcon><Cursor /></BigIcon><span>Modify</span></ModifyButton>
          </PanelBody>
          <PanelLabel>Select<Down s={5} /></PanelLabel>
        </Panel>
        <Panel $w={55}>
          <PanelBody>
            <IconGrid $cols="26px 26px" $rows="25px 24px" $pt={1} $pl={1}>
              <TypeStack c="#c2c2c2" f="#ebebeb" extra="doc" />
              <TypeStack extra="folder" />
              <Pressed><PropsIcon /></Pressed>
              <TypeStack extra="grid" />
            </IconGrid>
          </PanelBody>
          <PanelLabel>Properties</PanelLabel>
        </Panel>
        <Panel $w={55}>
          <PanelBody>
            <Big $w={36} $off><BigIcon><PasteIcon /></BigIcon>Paste<Drop $pt={2}><Down s={3} c="#999" /></Drop></Big>
            <IconGrid $cols="14px" $rows="16px 16px 16px" $pt={2}><Scissors /><CopyIcon /><MatchIcon /></IconGrid>
          </PanelBody>
          <PanelLabel>Clipboard</PanelLabel>
        </Panel>
        <Panel $w={71}>
          <PanelBody>
            <IconGrid $cols="44px 22px" $rows="17px 17px" $pt={10} $pl={3}>
              <Cmd><CutGeo />Cut<Slot $w={6}><Down s={3} /></Slot></Cmd>
              <Cmd><SplitFace /></Cmd>
              <Cmd><JoinGeo />Join<Slot $w={6}><Down s={3} /></Slot></Cmd>
              <Cmd><PaintGeo /><Down s={3} /></Cmd>
            </IconGrid>
          </PanelBody>
          <PanelLabel>Geometry</PanelLabel>
        </Panel>
        <Panel $w={38}>
          <PanelBody><Big $w={38}><BigIcon><ActivateIcon /></BigIcon>Activate</Big></PanelBody>
          <PanelLabel>Controls</PanelLabel>
        </Panel>
        <Panel $w={160}>
          <PanelBody>
            <IconGrid $cols="28px 26px 26px 26px" $rows="26px 25px" $pt={1} $pl={1}>
              <AlignIcon /><OffsetIcon /><MirrorIcon /><MirrorIcon pencil />
              <MoveIcon /><CopyMod /><RotateIcon /><TrimIcon />
            </IconGrid>
            <IconGrid $cols="17px 17px 17px" $rows="16px 16px 16px" $pt={2}>
              <Split /><Split gap /><PinSide c="#b5b5b5" x />
              <Array4 /><ScaleIcon /><PinSide />
              <TrimOne /><TrimOne two /><Delete />
            </IconGrid>
          </PanelBody>
          <PanelLabel>Modify</PanelLabel>
        </Panel>
        <Panel $w={37}>
          <PanelBody>
            <IconGrid $cols="26px 9px" $rows="25px 24px" $pt={1}>
              <MeasureA /><Down s={3} />
              <MeasureB /><Down s={3} />
            </IconGrid>
          </PanelBody>
          <PanelLabel>Measure</PanelLabel>
        </Panel>
        <Panel $w={31}>
          <PanelBody><IconGrid $cols="30px" $rows="25px 24px" $pt={1}><CreateA /><CreateB /></IconGrid></PanelBody>
          <PanelLabel>Create</PanelLabel>
        </Panel>
        <Panel $w={69} $ml={2}>
          <PanelBody>
            <Big $w={34}><BigIcon><EditRevolve /></BigIcon><span>Edit</span><span>Revolve</span></Big>
            <Big $w={32}><BigIcon><Visibility /></BigIcon><span>Visibility</span><span>Settings</span></Big>
          </PanelBody>
          <PanelLabel $bg="#dfebd1">Mode</PanelLabel>
        </Panel>
        <Panel $w={91}>
          <PanelBody>
            <Big $w={56}><BigIcon><WorkPlaneIcon /></BigIcon><span>Edit</span><span>Work Plane</span></Big>
            <Drop $pt={38}><Down s={3} /></Drop>
            <Divider />
            <Big $w={30}><BigIcon><PickNew /></BigIcon><span>Pick</span><span>New</span></Big>
          </PanelBody>
          <PanelLabel $bg="#dfebd1">Work Plane</PanelLabel>
        </Panel>
        <Panel $w={64}>
          <PanelBody>
            <PlacementList>
              <PlacementItem $on><FaceIcon />Face</PlacementItem>
              <PlacementItem><WpIcon />Work Plane</PlacementItem>
            </PlacementList>
          </PanelBody>
          <PanelLabel $bg="#dfebd1">Placement</PanelLabel>
        </Panel>
        <Panel $w={105}>
          <PanelBody>
            <Big $w={38}><BigIcon><LoadIcon /></BigIcon><span>Load into</span><span>Project</span></Big>
            <Big $w={66}><BigIcon><LoadIcon close /></BigIcon><span>Load into</span><span>Project and Close</span></Big>
          </PanelBody>
          <PanelLabel $bg="#c6c4e0">Family Editor</PanelLabel>
        </Panel>
      </Ribbon>
      <OptionsBar>Modify | Revolve</OptionsBar>
      <Body>
        <Side>
          <PaneTitle>Properties<Cross /></PaneTitle>
          <Preview><BigR /><Down s={5} c="#888" /></Preview>
          <TypeRow>
            <Combo>Generic Models (1)<I w={6} h={4} c="#777"><path d="M.5.5L3 3.200 5.500.5" /></I></Combo>
            <EditType><EditTypeIcon />Edit Type</EditType>
          </TypeRow>
          <Grid>
            <Group>Constraints</Group>
            <Prop k="End Angle" focus btn>360.00°</Prop>
            <Prop k="Start Angle" btn>0.00°</Prop>
            <Prop k="Work Plane" off>&lt;not associated&gt;</Prop>
            <Group>Graphics</Group>
            <Prop k="Visible" btn><Check /></Prop>
            <Prop k="Visibility/Graphics Overrides"><EditButton>Edit...</EditButton></Prop>
            <Group>Materials and Finishes</Group>
            <Prop k="Material" btn>&lt;By Category&gt;</Prop>
            <Group>Identity Data</Group>
            <Prop k="Subcategory">&lt;None&gt;</Prop>
            <Prop k="Solid/Void">Solid</Prop>
          </Grid>
          <PaneFooter><Link>Properties help</Link><Apply>Apply</Apply></PaneFooter>
          <PaneTitle>Project Browser - Family3<Cross /></PaneTitle>
          <Tree>
            <Node $d={0}><Toggle open /><Stub /><NodeIcon><ViewsIcon /></NodeIcon>Views (tutto)</Node>
            <Node $d={1}><Toggle open /><Stub $w={6} />&nbsp;Floor Plans (Pianta del pavimento)</Node>
            <Node $d={2}><Stub $w={11} $ml={3} /><Leaf>Livello rif.</Leaf></Node>
            <Node $d={1}><Toggle /><Stub $w={6} />&nbsp;Ceiling Plans (Pianta dei controsoffitti)</Node>
            <Node $d={1}><Toggle /><Stub $w={6} />&nbsp;3D Views (Vista 3D)</Node>
            <Node $d={1}><Toggle /><Stub $w={6} />&nbsp;Elevations (Prospetto 1)</Node>
            <Node $d={0}><Stub $w={7} $ml={4} /><NodeIcon><SheetIcon /></NodeIcon>Sheets (tutto)</Node>
            <Node $d={0}><Toggle /><Stub /><NodeIcon><FamIcon /></NodeIcon>Families</Node>
            <Node $d={0}><Toggle /><Stub /><NodeIcon><GroupIcon /></NodeIcon>Groups</Node>
            <Node $d={0}><Stub $w={7} $ml={4} /><NodeIcon><LinkIcon /></NodeIcon>Revit Links</Node>
          </Tree>
        </Side>
        <Work>
          <ViewTabs>
            <ViewTab><HomeIcon />&nbsp;Retro</ViewTab>
            <ViewTab><CubeIcon />Vista 1</ViewTab>
            <ViewTab><CubeIcon />{"{3D}"}</ViewTab>
            <ViewTab><CubeIcon />{"{3D}"}</ViewTab>
            <ViewTab><PlanIcon />Level 1</ViewTab>
            <ViewTab><CubeIcon />{"{3D}"}</ViewTab>
            <ViewTab $on><PlanIcon c={dk} />Livello rif.<Cross /></ViewTab>
          </ViewTabs>
          <Drawing />
        </Work>
      </Body>
      <Pointer width="150" height="108" viewBox="384 222 150 108">
        <path d="M530 325L393 231" stroke="#f5141c" strokeWidth="1.700" />
        <path d="M387.500 226.800l9.500 2-4.300 6.400z" fill="#f5141c" />
      </Pointer>
    </Window>
  );
}
